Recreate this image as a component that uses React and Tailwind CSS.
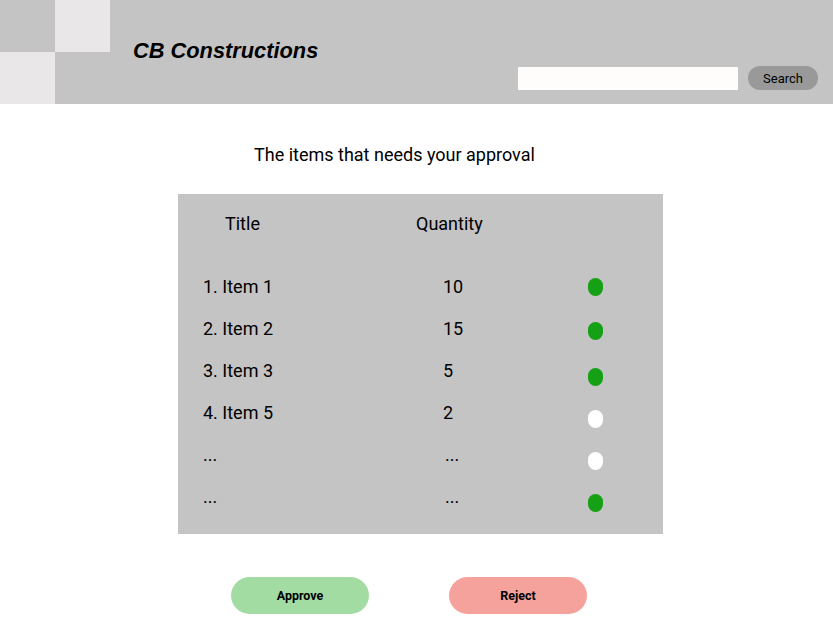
import React from "react";

const rows = [
  { title: "1. Item 1", qty: "10", on: true, dy: "mt-[2px]" },
  { title: "2. Item 2", qty: "15", on: true, dy: "mt-[4px]" },
  { title: "3. Item 3", qty: "5", on: true, dy: "mt-[8px]" },
  { title: "4. Item 5", qty: "2", on: false, dy: "mt-[8px]" },
  { title: "...", qty: "...", on: false, dy: "mt-[8px]", pad: "pl-[2px]" },
  { title: "...", qty: "...", on: true, dy: "mt-[8px]", pad: "pl-[2px]" },
];

export default function App() {
  return (
    <div className="min-h-screen bg-white font-['Roboto',sans-serif] text-black">
      <header className="flex h-[104px] bg-[#c4c4c4]">
        <div className="grid w-[110px] grid-cols-2 grid-rows-2">
          <div className="bg-[#c4c4c4]" />
          <div className="bg-[#e9e7e8]" />
          <div className="bg-[#e9e7e8]" />
          <div className="bg-[#c4c4c4]" />
        </div>
        <div className="flex flex-1 items-start justify-between">
          <h1 className="ml-[23px] mt-[37px] font-['Liberation_Sans',sans-serif] text-[21.8px] font-bold italic leading-[28px]">
            CB Constructions
          </h1>
          <div className="mr-[15px] mt-[66px] flex items-center gap-[10px]">
            <input className="mt-[1px] h-[23px] w-[220px] bg-[#fffdfc] outline-none" />
            <button className="h-[24px] w-[70px] rounded-full bg-[#999999] pt-[1px] text-[13px]">
              Search
            </button>
          </div>
        </div>
      </header>

      <p className="mt-[40px] pl-[254px] text-[18px] leading-[22px]">
        The items that needs your approval
      </p>

      <div className="ml-[178px] mt-[28px] h-[340px] w-[485px] bg-[#c4c4c4] pt-[19px] text-[18px]">
        <div className="flex leading-[22px]">
          <span className="ml-[47px] w-[191px]">Title</span>
          <span>Quantity</span>
        </div>
        <div className="mt-[41px] flex flex-col gap-[20px]">
          {rows.map((r, i) => (
            <div key={i} className="flex h-[22px] items-start leading-[22px]">
              <span className="ml-[25px] w-[240px]">{r.title}</span>
              <span className={`w-[145px] ${r.pad || ""}`}>{r.qty}</span>
              <span
                className={`${r.dy} block h-[18px] w-[15px] rounded-full ${
                  r.on ? "bg-[#16a016]" : "bg-white"
                }`}
              />
            </div>
          ))}
        </div>
      </div>

      <div className="mt-[43px] flex gap-[80px] pl-[231px]">
        <button className="h-[37px] w-[138px] rounded-full bg-[#a3dca3] pt-[1px] text-[12.5px] font-bold">
          Approve
        </button>
        <button className="h-[37px] w-[138px] rounded-full bg-[#f6a29c] pt-[1px] text-[12.5px] font-bold">
          Reject
        </button>
      </div>
    </div>
  );
}
